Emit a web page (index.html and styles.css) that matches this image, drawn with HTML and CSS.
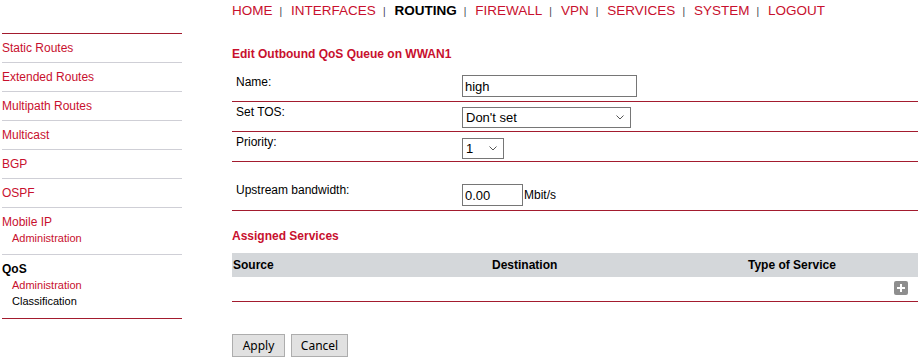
FILE: index.html
```html
<!DOCTYPE html>
<html lang="en">
<head>
  <meta charset="UTF-8">
  <title>Routing - QoS</title>
  <link rel="stylesheet" href="styles.css">
</head>
<body>
  <!-- Top menu -->
  <div class="topbar">
    <nav class="menu">
      <a href="#">HOME</a><span class="sep">|</span>
      <a href="#">INTERFACES</a><span class="sep">|</span>
      <a href="#" class="current">ROUTING</a><span class="sep">|</span>
      <a href="#">FIREWALL</a><span class="sep">|</span>
      <a href="#">VPN</a><span class="sep">|</span>
      <a href="#">SERVICES</a><span class="sep">|</span>
      <a href="#">SYSTEM</a><span class="sep">|</span>
      <a href="#">LOGOUT</a>
    </nav>
  </div>

  <div class="page">
    <!-- Side menu -->
    <aside class="side">
      <div class="side-item"><a href="#">Static Routes</a></div>
      <div class="side-item"><a href="#">Extended Routes</a></div>
      <div class="side-item"><a href="#">Multipath Routes</a></div>
      <div class="side-item"><a href="#">Multicast</a></div>
      <div class="side-item"><a href="#">BGP</a></div>
      <div class="side-item"><a href="#">OSPF</a></div>
      <div class="side-item">
        <a href="#">Mobile IP</a>
        <div class="sub"><a href="#">Administration</a></div>
      </div>
      <div class="side-item last">
        <a href="#" class="active">QoS</a>
        <div class="sub">
          <a href="#">Administration</a>
          <a href="#" class="here">Classification</a>
        </div>
      </div>
    </aside>

    <!-- Main content -->
    <main class="content">
      <h3 class="title">Edit Outbound QoS Queue on WWAN1</h3>

      <form class="form">
        <div class="row">
          <div class="lbl">Name:</div>
          <div class="val"><input type="text" class="inp name" value="high"></div>
        </div>
        <div class="row">
          <div class="lbl">Set TOS:</div>
          <div class="val">
            <span class="sel-wrap">
              <select class="sel tos">
                <option>Don't set</option>
              </select>
              <svg class="chev" width="8" height="5" viewBox="0 0 8 5"><path d="M0.5 0.5 L4 4 L7.5 0.5" fill="none" stroke="#555" stroke-width="1"/></svg>
            </span>
          </div>
        </div>
        <div class="row">
          <div class="lbl">Priority:</div>
          <div class="val">
            <span class="sel-wrap prio-wrap">
              <select class="sel prio">
                <option>1</option>
              </select>
              <svg class="chev" width="8" height="5" viewBox="0 0 8 5"><path d="M0.5 0.5 L4 4 L7.5 0.5" fill="none" stroke="#555" stroke-width="1"/></svg>
            </span>
          </div>
        </div>
        <div class="row tall">
          <div class="lbl">Upstream bandwidth:</div>
          <div class="val"><input type="text" class="inp bw" value="0.00"><span class="unit">Mbit/s</span></div>
        </div>
      </form>

      <h3 class="title services-title">Assigned Services</h3>
      <div class="svc-head">
        <div>Source</div>
        <div>Destination</div>
        <div>Type of Service</div>
      </div>
      <div class="svc-row">
        <svg class="add" width="14" height="14" viewBox="0 0 14 14">
          <rect x="0" y="0" width="14" height="14" rx="2" fill="#8e8e8e"/>
          <rect x="6" y="3" width="2" height="8" fill="#fff"/>
          <rect x="3" y="6" width="8" height="2" fill="#fff"/>
        </svg>
      </div>

      <div class="actions">
        <button type="button" class="btn apply">Apply</button>
        <button type="button" class="btn cancel">Cancel</button>
      </div>
    </main>
  </div>
</body>
</html>
```

FILE: styles.css
```css
* {
  box-sizing: border-box;
}

body {
  margin: 0;
  font-family: "Liberation Sans", Arial, sans-serif;
  font-size: 12px;
  color: #000;
  background: #fff;
}

a {
  text-decoration: none;
  color: #c8102e;
}

/* top menu */
.topbar {
  height: 33px;
  padding: 1px 0 0 232px;
}

.menu {
  display: flex;
  align-items: baseline;
  font-size: 13.5px;
  line-height: 20px;
}

.menu a.current {
  color: #000;
  font-weight: bold;
}

.menu .sep {
  font-size: 10px;
  color: #3a3a4a;
  margin: 0 9px 0 7px;
}

/* page */
.page {
  display: flex;
  align-items: flex-start;
}

.side {
  width: 180px;
  margin-left: 2px;
  border-top: 1px solid #a31b2e;
  border-bottom: 1px solid #a31b2e;
}

.side-item {
  padding: 6px 0;
  line-height: 16px;
  border-bottom: 1px solid #cfcfd6;
}

.side-item.last {
  border-bottom: none;
  padding-bottom: 7px;
}

.side-item a.active {
  color: #000;
  font-weight: bold;
}

.side-item a.here {
  color: #000;
}

.side-item .sub {
  padding-left: 10px;
  margin-bottom: 2px;
  font-size: 11px;
}

.side-item .sub a {
  display: block;
}

.content {
  margin-left: 50px;
  width: 686px;
  padding-top: 14px;
}

.title {
  margin: 0 0 11px;
  font-size: 12px;
  line-height: 14px;
  color: #c8102e;
}

/* form rows */
.row {
  display: flex;
  height: 30px;
  padding-top: 3px;
  border-bottom: 1px solid #a31b2e;
}

.row.tall {
  height: 49px;
  padding-top: 21px;
}

.lbl {
  width: 230px;
  padding-left: 4px;
  line-height: 15px;
}

.val {
  display: flex;
  align-items: center;
  height: 22px;
}

.inp {
  height: 22px;
  border: 1px solid #767676;
  padding: 0 2px;
  font-family: "Liberation Sans", Arial, sans-serif;
  font-size: 13px;
  color: #000;
  border-radius: 0;
}

.inp.name {
  width: 175px;
}

.row.tall .val {
  margin-top: 1px;
}

.inp.bw {
  width: 61px;
}

.unit {
  margin-left: 1px;
}

.sel-wrap {
  position: relative;
  display: inline-block;
  margin-top: 2px;
  height: 21px;
}

.prio-wrap {
  margin-top: 4px;
}

.sel {
  appearance: none;
  -webkit-appearance: none;
  display: block;
  height: 21px;
  border: 1px solid #767676;
  border-radius: 0;
  background: #fff;
  color: #000;
  font-family: "Liberation Sans", Arial, sans-serif;
  font-size: 13px;
  padding: 0 0 0 3px;
}

.sel.tos {
  width: 169px;
}

.sel.prio {
  width: 42px;
}

.chev {
  position: absolute;
  right: 7px;
  top: 8px;
  pointer-events: none;
}

/* services table */
.services-title {
  margin: 18px 0 10px;
}

.svc-head {
  display: grid;
  grid-template-columns: 259px 256px 1fr;
  align-items: center;
  height: 24px;
  padding-left: 1px;
  background: #d4d7da;
  font-weight: bold;
}

.svc-row {
  display: flex;
  justify-content: flex-end;
  height: 25px;
  padding: 4px 10px 0 0;
  border-bottom: 1px solid #a31b2e;
}

.actions {
  display: flex;
  gap: 6px;
  margin-top: 32px;
}

.btn {
  height: 23px;
  border: 1px solid #adadad;
  background: #e1e1e1;
  font-family: "Noto Sans", "Open Sans", sans-serif;
  font-size: 12px;
  color: #000;
  padding: 0;
}

.btn.apply {
  width: 53px;
}

.btn.cancel {
  width: 57px;
}
```
